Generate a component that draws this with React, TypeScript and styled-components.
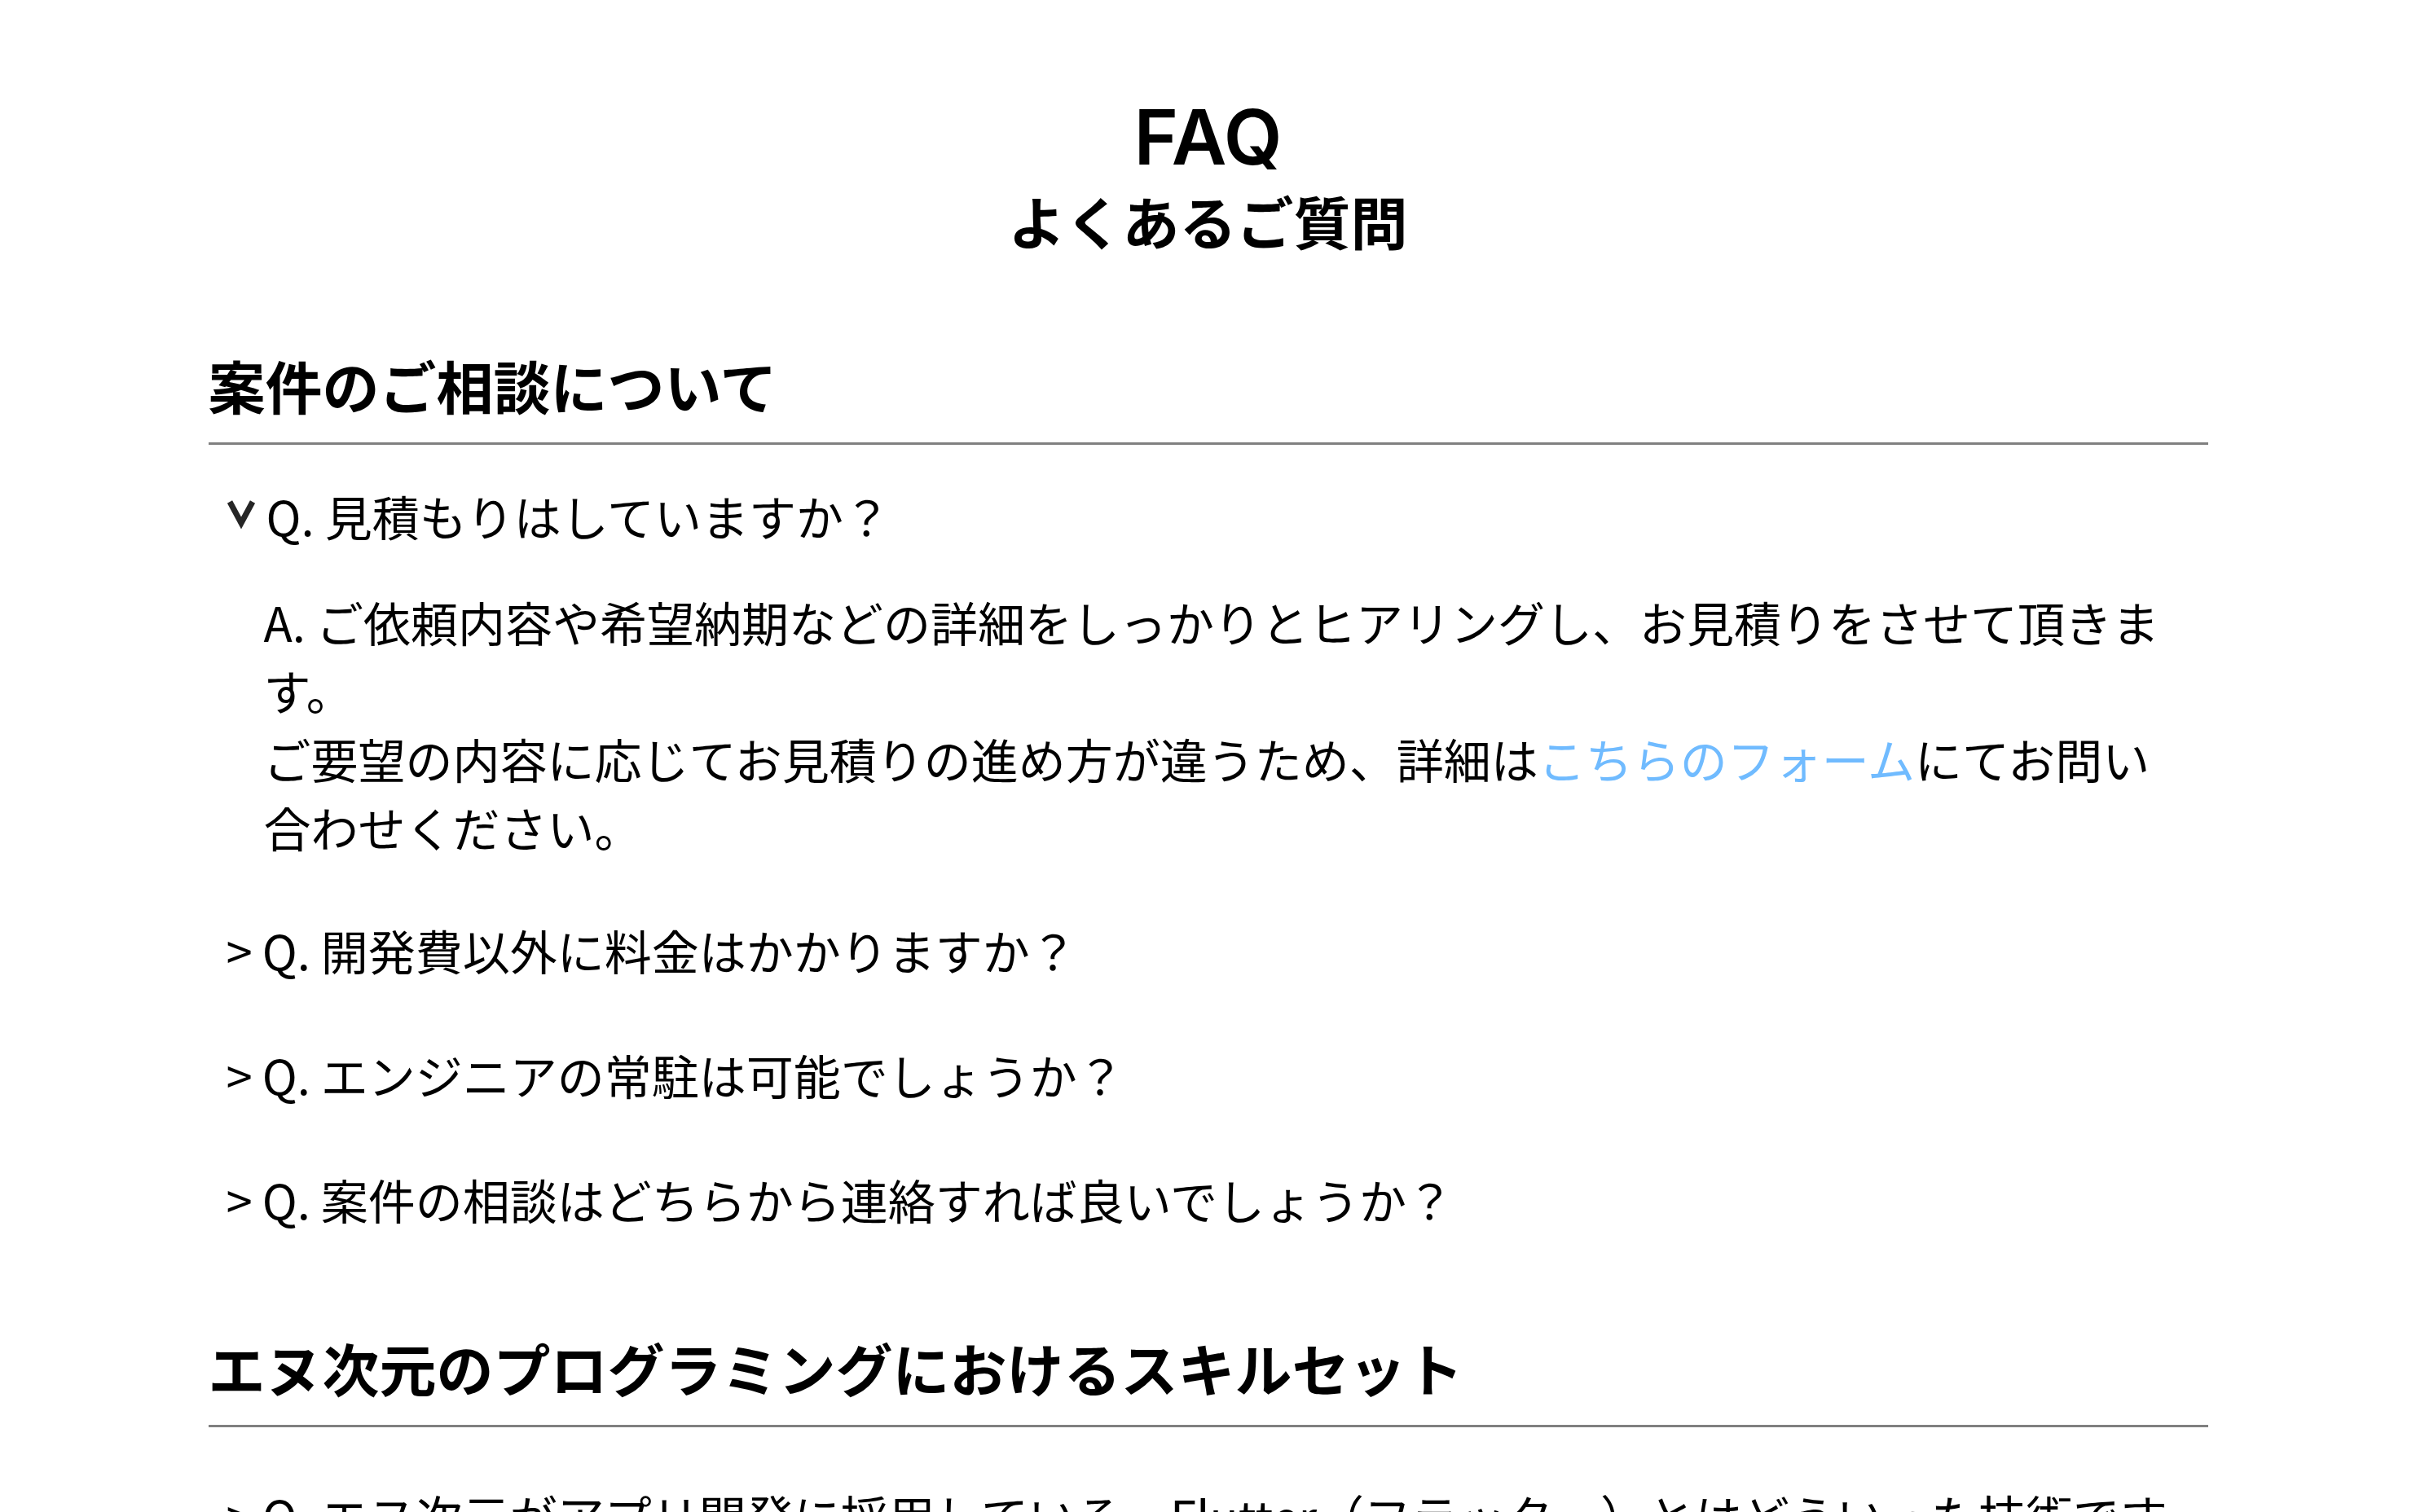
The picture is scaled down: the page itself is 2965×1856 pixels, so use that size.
import React, { useState } from "react";
import styled, { createGlobalStyle } from "styled-components";

const GlobalStyle = createGlobalStyle`
  * {
    box-sizing: border-box;
  }
  body {
    margin: 0;
    background: #fff;
    color: #000;
    font-family: "Noto Sans CJK JP", sans-serif;
    font-size: 58px;
    line-height: 84px;
  }
`;

const Page = styled.main`
  max-width: 2454px;
  margin: 0 auto;
  padding: 114px 0;
`;

const PageHeader = styled.header`
  padding-bottom: 23px;
  text-align: center;
`;

const PageTitle = styled.h1`
  margin: 0;
  font-family: Inter, sans-serif;
  font-size: 93px;
  font-weight: 600;
  line-height: 108px;
`;

const Subtitle = styled.p`
  margin: 0;
  font-size: 70px;
  font-weight: 700;
  line-height: 98px;
`;

const Section = styled.section`
  padding-top: 76px;
`;

const SectionTitle = styled.h2`
  margin: 0 0 32px;
  padding-bottom: 16px;
  border-bottom: 3px solid #808080;
  font-size: 70px;
  font-weight: 700;
  line-height: 108px;
`;

const List = styled.ul`
  margin: 0;
  padding: 0 22px;
  list-style: none;
`;

const Item = styled.li<{ $open: boolean }>`
  padding: ${(p) => (p.$open ? "13px 0 33px" : "34px 0 35px")};
`;

const Question = styled.button`
  display: flex;
  align-items: flex-start;
  gap: 12px;
  padding: 0;
  border: 0;
  background: none;
  color: inherit;
  font: inherit;
  text-align: left;
  cursor: pointer;
`;

const OpenMark = styled.svg`
  flex: none;
  width: 37px;
  height: 84px;
`;

const Answer = styled.div`
  margin-top: 46px;
  padding: 0 20px 0 46px;
`;

const Line = styled.p`
  margin: 0;
`;

const Link = styled.a`
  color: #70bbff;
  text-decoration: none;
`;

type Faq = { question: string; answer?: React.ReactNode };

const consulting: Faq[] = [
  {
    question: "Q. 見積もりはしていますか？",
    answer: (
      <>
        <Line>
          A. ご依頼内容や希望納期などの詳細をしっかりとヒアリングし、お見積りをさせて頂きます。
        </Line>
        <Line>
          ご要望の内容に応じてお見積りの進め方が違うため、詳細は
          <Link href="#contact">こちらのフォーム</Link>
          にてお問い合わせください。
        </Line>
      </>
    ),
  },
  { question: "Q. 開発費以外に料金はかかりますか？" },
  { question: "Q. エンジニアの常駐は可能でしょうか？" },
  { question: "Q. 案件の相談はどちらから連絡すれば良いでしょうか？" },
];

const skills: Faq[] = [
  {
    question:
      "Q. エヌ次元がアプリ開発に採用している、Flutter（フラッター）とはどういった技術ですか？",
  },
];

function FaqItem({ question, answer }: Faq) {
  const [open, setOpen] = useState(Boolean(answer));
  return (
    <Item $open={open}>
      <Question type="button" aria-expanded={open} onClick={() => setOpen(!open)}>
        {open ? (
          <OpenMark viewBox="0 0 37 84" aria-hidden="true">
            <path d="M4 25L18 51L32 25" fill="none" stroke="#262626" strokeWidth="7" />
          </OpenMark>
        ) : (
          <span aria-hidden="true">&gt;</span>
        )}
        <span>{question}</span>
      </Question>
      {open && answer && <Answer>{answer}</Answer>}
    </Item>
  );
}

function FaqSection({ title, items }: { title: string; items: Faq[] }) {
  return (
    <Section>
      <SectionTitle>{title}</SectionTitle>
      <List>
        {items.map((item) => (
          <FaqItem key={item.question} {...item} />
        ))}
      </List>
    </Section>
  );
}

export default function App() {
  return (
    <>
      <GlobalStyle />
      <Page>
        <PageHeader>
          <PageTitle>FAQ</PageTitle>
          <Subtitle>よくあるご質問</Subtitle>
        </PageHeader>
        <FaqSection title="案件のご相談について" items={consulting} />
        <FaqSection title="エヌ次元のプログラミングにおけるスキルセット" items={skills} />
      </Page>
    </>
  );
}
